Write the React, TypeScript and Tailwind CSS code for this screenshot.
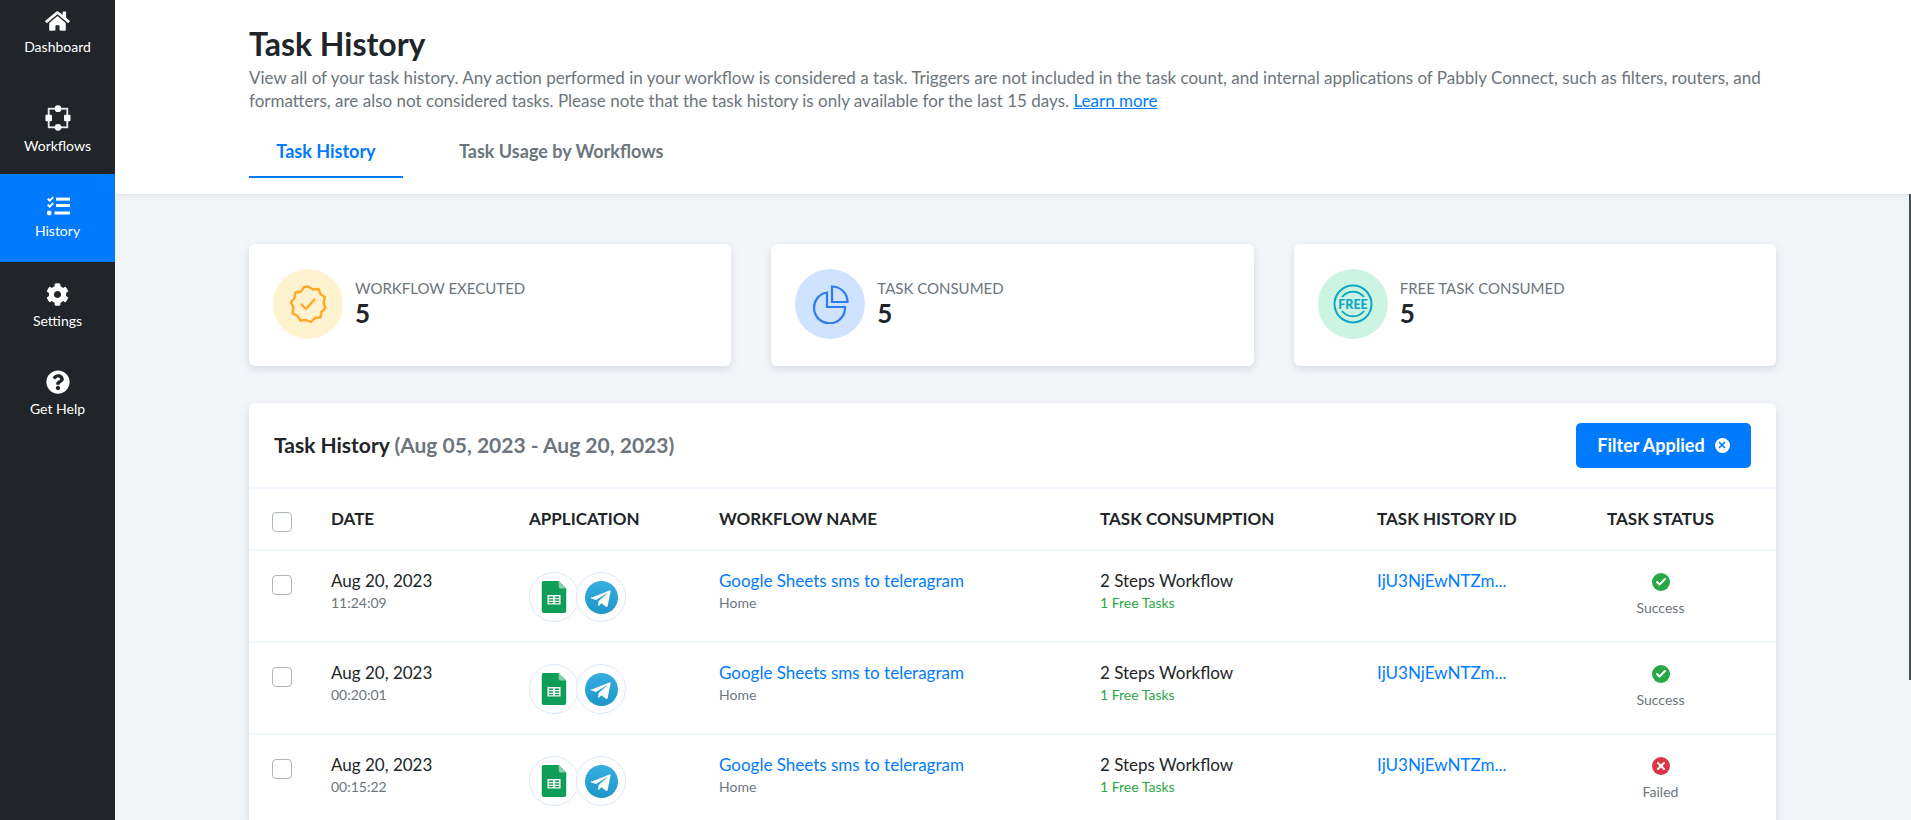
import { Check, X } from "lucide-react";

const font = "font-['Lato','Liberation_Sans',sans-serif]";

function HomeIcon() {
  return (
    <svg viewBox="0 0 576 512" className="h-[22px] w-[25px] fill-white">
      <path d="M280.4 148.3 96 300.1V464a16 16 0 0 0 16 16l112-.3a16 16 0 0 0 16-16V368a16 16 0 0 1 16-16h64a16 16 0 0 1 16 16v95.6a16 16 0 0 0 16 16.1l112 .3a16 16 0 0 0 16-16V300L295.7 148.3a12.2 12.2 0 0 0-15.3 0zM571.6 251.5 488 182.6V44a12 12 0 0 0-12-12h-56a12 12 0 0 0-12 12v72.6L318.5 43a48 48 0 0 0-61 0L4.3 251.5a12 12 0 0 0-1.6 16.9l25.5 31a12 12 0 0 0 16.9 1.6l235.2-193.7a12.2 12.2 0 0 1 15.3 0L530.9 301a12 12 0 0 0 16.9-1.6l25.5-31a12 12 0 0 0-1.7-16.9z" />
    </svg>
  );
}

function WorkflowIcon() {
  return (
    <svg viewBox="0 0 28 28" className="h-[26px] w-[28px]">
      <rect x="4" y="4" width="20" height="20" fill="none" stroke="#e5e7eb" strokeWidth="2" />
      <circle cx="14" cy="4" r="3.6" fill="#fff" />
      <circle cx="14" cy="24" r="3.6" fill="#fff" />
      <rect x="0.5" y="10.5" width="7" height="7" rx="1" fill="#fff" />
      <rect x="20.5" y="10.5" width="7" height="7" rx="1" fill="#fff" />
    </svg>
  );
}

function HistoryIcon() {
  return (
    <svg viewBox="0 0 24 20" className="h-[20px] w-[24px] fill-white">
      <path d="M1 3.2 2.3 2l1.4 1.3L6.6.4 8 1.7 3.7 6z" />
      <path d="M1 9.2 2.3 8l1.4 1.3 2.9-2.9L8 7.7 3.7 12z" />
      <circle cx="3.2" cy="17" r="2.4" />
      <rect x="10" y="1.6" width="14" height="3" />
      <rect x="10" y="8" width="14" height="3" />
      <rect x="8.5" y="15.5" width="15.5" height="3" />
    </svg>
  );
}

function GearIcon() {
  return (
    <svg viewBox="0 0 512 512" className="h-[23px] w-[23px] fill-white">
      <path d="M487.4 315.7l-42.6-24.6c4.3-23.2 4.3-47 0-70.2l42.6-24.6c4.9-2.8 7.1-8.6 5.5-14-11.1-35.6-30-67.8-54.7-94.6-3.8-4.1-10-5.1-14.8-2.3L380.8 110c-17.9-15.4-38.5-27.3-60.8-35.1V25.8c0-5.6-3.9-10.5-9.4-11.7-36.7-8.2-74.3-7.8-109.2 0-5.5 1.2-9.4 6.1-9.4 11.7V75c-22.2 7.9-42.8 19.8-60.8 35.1L88.7 85.5c-4.9-2.8-11-1.9-14.8 2.3-24.7 26.7-43.6 58.9-54.7 94.6-1.7 5.4.6 11.2 5.5 14L67.3 221c-4.3 23.2-4.3 47 0 70.2l-42.6 24.6c-4.9 2.8-7.1 8.6-5.5 14 11.1 35.6 30 67.8 54.7 94.6 3.8 4.1 10 5.1 14.8 2.3l42.6-24.6c17.9 15.4 38.5 27.3 60.8 35.1v49.2c0 5.6 3.9 10.5 9.4 11.7 36.7 8.2 74.3 7.8 109.2 0 5.5-1.2 9.4-6.1 9.4-11.7v-49.2c22.2-7.9 42.8-19.8 60.8-35.1l42.6 24.6c4.9 2.8 11 1.9 14.8-2.3 24.7-26.7 43.6-58.9 54.7-94.6 1.5-5.5-.7-11.3-5.6-14.1zM256 336c-44.1 0-80-35.9-80-80s35.9-80 80-80 80 35.9 80 80-35.9 80-80 80z" />
    </svg>
  );
}

function HelpIcon() {
  return (
    <svg viewBox="0 0 512 512" className="h-[24px] w-[24px] fill-white">
      <path d="M504 256c0 137-111 248-248 248S8 393 8 256 119 8 256 8s248 111 248 248zM262.700 90c-54.500 0-89.300 23-116.500 63.800-3.500 5.300-2.400 12.400 2.700 16.300l34.700 26.300c5.200 3.900 12.600 3 16.700-2.100 17.900-22.700 30.100-35.800 57.300-35.800 20.400 0 45.700 13.100 45.700 32.900 0 14.900-12.300 22.600-32.400 33.900C247.200 238.400 216 254.900 216 296v4c0 6.600 5.400 12 12 12h56c6.600 0 12-5.400 12-12v-1.300c0-28.500 83.200-29.700 83.200-106.700 0-58-60.200-102-116.500-102zM256 338c-25.400 0-46 20.600-46 46 0 25.400 20.600 46 46 46s46-20.600 46-46c0-25.400-20.600-46-46-46z" />
    </svg>
  );
}

function NavItem({ label, icon, active, h }: { label: string; icon: React.ReactNode; active?: boolean; h: string }) {
  return (
    <div className={`flex flex-col items-center justify-center gap-[6px] text-[14px] text-white ${h} ${active ? "bg-[#007bff]" : ""}`}>
      {icon}
      <span className="leading-[18px]">{label}</span>
    </div>
  );
}

function BadgeIcon() {
  return (
    <svg viewBox="0 0 40 40" className="h-[40px] w-[40px]" fill="none" stroke="#ffa726" strokeWidth="2.4" strokeLinecap="round" strokeLinejoin="round">
      <path d="M20 2.500 25 5.500 30.500 5 32.500 10 37 13.200 35.500 18.800 37.500 24 33.500 27.800 32.500 33.300 27 34 23 38 18 36 12.500 36.500 9.500 32 4.500 29 5.500 23.500 2.800 18.500 6.500 14 7.500 8.500 13 7.500 16 3.200z" />
      <path d="M13.500 20.500 18 25 26.500 15.500" />
    </svg>
  );
}

function PieIcon() {
  return (
    <svg viewBox="0 0 40 40" className="h-[40px] w-[40px]" fill="none" stroke="#2f7cf0" strokeWidth="2.200">
      <path d="M17 8.500A15.500 15.500 0 1 0 35 23H17z" />
      <path d="M22 2.500V18h15.500A15.500 15.500 0 0 0 22 2.500z" />
    </svg>
  );
}

function FreeIcon() {
  return (
    <svg viewBox="0 0 40 40" className="h-[40px] w-[40px]" fill="none" stroke="#0ea5c6" strokeWidth="2">
      <circle cx="20" cy="20" r="18.500" />
      <path d="M9 13A14 14 0 0 1 31 13" />
      <path d="M9 27A14 14 0 0 0 31 27" />
      <text x="20" y="24.800" textAnchor="middle" fontSize="12.500" fontWeight="900" fill="#0ea5c6" stroke="none" fontFamily="Lato, sans-serif">FREE</text>
    </svg>
  );
}

function StatCard({ title, icon, tint }: { title: string; icon: React.ReactNode; tint: string }) {
  return (
    <div className="flex h-[122px] items-center gap-[12px] rounded-[6px] bg-white pb-[2px] pl-[24px] shadow-[0_3px_8px_rgba(70,90,120,0.18)]">
      <div className={`flex h-[70px] w-[70px] items-center justify-center rounded-full ${tint}`}>{icon}</div>
      <div className="-mt-[2px]">
        <div className="text-[15px] leading-[20px] text-[#6c757d]">{title}</div>
        <div className="text-[26px] leading-[30px] font-bold text-[#212529]">5</div>
      </div>
    </div>
  );
}

function SheetsLogo() {
  return (
    <svg viewBox="0 0 26 34" className="h-[32px] w-[26px]">
      <path d="M2 0h16l8 8v24a2 2 0 0 1-2 2H2a2 2 0 0 1-2-2V2a2 2 0 0 1 2-2z" fill="#0f9d58" />
      <path d="M18 0l8 8h-6a2 2 0 0 1-2-2z" fill="#87ceac" />
      <path d="M6 15h14v10H6z M7.500 16.500v1.500h4.500v-1.500z M14 16.500v1.500h4.500v-1.500z M7.500 19.500v1.500h4.500v-1.500z M14 19.500v1.500h4.500v-1.500z M7.500 22.200v1.400h4.500v-1.400z M14 22.200v1.400h4.500v-1.400z" fill="#f1f1f1" fillRule="evenodd" />
    </svg>
  );
}

function TelegramLogo() {
  return (
    <svg viewBox="0 0 34 34" className="h-[33px] w-[33px]">
      <defs>
        <linearGradient id="tg" x1="0" y1="0" x2="0" y2="1">
          <stop offset="0" stopColor="#37aee2" />
          <stop offset="1" stopColor="#1e96c8" />
        </linearGradient>
      </defs>
      <circle cx="17" cy="17" r="17" fill="url(#tg)" />
      <path d="M7 17l18-7.200c.9-.3 1.600.2 1.300 1.400l-3 14.500c-.2 1-.9 1.300-1.700.8l-4.700-3.500-2.300 2.200c-.3.300-.5.500-1 .5l.3-4.800 8.700-7.900c.4-.3-.1-.5-.6-.2l-10.700 6.800-4.600-1.500c-1-.3-1-1 .1-1.400z" fill="#fff" />
    </svg>
  );
}

function Row({ time, failed }: { time: string; failed?: boolean }) {
  return (
    <div className="grid h-[92px] grid-cols-[82px_198px_190px_381px_277px_196px_1fr] border-t-2 border-[#eff6ff]">
      <div className="pt-[24px] pl-[23px]">
        <div className="h-[20px] w-[20px] rounded-[4px] border border-[#adb5bd] bg-white" />
      </div>
      <div className="pt-[19px]">
        <div className="text-[17px] leading-[22px] text-[#212529]">Aug 20, 2023</div>
        <div className="mt-[2px] text-[14px] leading-[18px] text-[#6c757d]">{time}</div>
      </div>
      <div className="flex items-start pt-[21px]">
        <div className="flex h-[50px] w-[50px] items-center justify-center rounded-full border border-[#dbe7fb] bg-white">
          <SheetsLogo />
        </div>
        <div className="-ml-[3px] flex h-[50px] w-[50px] items-center justify-center rounded-full border border-[#dbe7fb] bg-white">
          <TelegramLogo />
        </div>
      </div>
      <div className="pt-[19px]">
        <div className="text-[17px] leading-[22px] text-[#007bff]">Google Sheets sms to teleragram</div>
        <div className="mt-[2px] text-[14px] leading-[18px] text-[#6c757d]">Home</div>
      </div>
      <div className="pt-[19px]">
        <div className="text-[17px] leading-[22px] text-[#212529]">2 Steps Workflow</div>
        <div className="mt-[2px] text-[14px] leading-[18px] text-[#28a745]">1 Free Tasks</div>
      </div>
      <div className="pt-[19px] text-[17px] leading-[22px] text-[#007bff]">IjU3NjEwNTZm...</div>
      <div className="flex flex-col items-center pt-[22px] pr-[28px]">
        <div className={`flex h-[18px] w-[18px] items-center justify-center rounded-full ${failed ? "bg-[#dc3545]" : "bg-[#28a745]"}`}>
          {failed ? <X size={12} strokeWidth={4} color="#fff" /> : <Check size={12} strokeWidth={4} color="#fff" />}
        </div>
        <div className="mt-[8px] text-[14px] leading-[18px] text-[#6c757d]">{failed ? "Failed" : "Success"}</div>
      </div>
    </div>
  );
}

export default function App() {
  return (
    <div className={`${font} flex h-[820px] w-full overflow-hidden bg-[#f3f6f9]`}>
      <aside className="flex w-[115px] shrink-0 flex-col bg-[#212529] pt-[2px]">
        <NavItem label="Dashboard" icon={<HomeIcon />} h="h-[84px] pb-[22px]" />
        <NavItem label="Workflows" icon={<WorkflowIcon />} h="h-[88px]" />
        <NavItem label="History" icon={<HistoryIcon />} active h="h-[88px]" />
        <NavItem label="Settings" icon={<GearIcon />} h="h-[88px]" />
        <NavItem label="Get Help" icon={<HelpIcon />} h="h-[88px]" />
      </aside>
      <main className="relative min-w-0 flex-1">
        <div className="absolute top-[194px] right-0 h-[486px] w-[2px] bg-[#495057]" />
        <header className="h-[194px] bg-white pt-[24px] pl-[134px] shadow-[0_2px_6px_rgba(70,90,120,0.12)]">
          <h1 className="text-[32px] leading-[40px] font-bold text-[#212529]">Task History</h1>
          <p className="mt-[2px] w-[1580px] text-[17px] leading-[23px] text-[#6c757d]">
            View all of your task history. Any action performed in your workflow is considered a task. Triggers are not included in the task count, and internal applications of Pabbly Connect, such as filters, routers, and formatters, are also not considered tasks. Please note that the task history is only available for the last 15 days. <span className="text-[#007bff] underline">Learn more</span>
          </p>
          <div className="mt-[15px] flex text-[18px] font-bold">
            <div className="flex h-[51px] w-[154px] items-start justify-center border-b-2 border-[#007bff] pt-[11px] text-[#007bff]">Task History</div>
            <div className="ml-[56px] pt-[11px] text-[#6c757d]">Task Usage by Workflows</div>
          </div>
        </header>
        <div className="w-[1527px] pt-[50px] ml-[134px]">
          <div className="grid grid-cols-3 gap-[40px]">
            <StatCard title="WORKFLOW EXECUTED" icon={<BadgeIcon />} tint="bg-[#fff2cf]" />
            <StatCard title="TASK CONSUMED" icon={<PieIcon />} tint="bg-[#cfe2ff]" />
            <StatCard title="FREE TASK CONSUMED" icon={<FreeIcon />} tint="bg-[#cbf4e3]" />
          </div>
          <section className="mt-[37px] rounded-[6px] bg-white shadow-[0_3px_8px_rgba(70,90,120,0.18)]">
            <div className="flex h-[84px] items-center justify-between pr-[25px] pl-[25px]">
              <div className="text-[21px] font-bold text-[#212529]">
                Task History <span className="text-[#6c757d]">(Aug 05, 2023 - Aug 20, 2023)</span>
              </div>
              <button className="flex h-[45px] w-[175px] items-center justify-center gap-[10px] rounded-[5px] bg-[#007bff] text-[18px] font-bold text-white">
                Filter Applied
                <span className="flex h-[15px] w-[15px] items-center justify-center rounded-full bg-white">
                  <X size={10} strokeWidth={4} color="#007bff" />
                </span>
              </button>
            </div>
            <div className="grid h-[62px] grid-cols-[82px_198px_190px_381px_277px_196px_1fr] items-center border-t-2 border-[#eff6ff] text-[17px] font-bold text-[#212529]">
              <div className="pt-[6px] pl-[23px]">
                <div className="h-[20px] w-[20px] rounded-[4px] border border-[#adb5bd] bg-white" />
              </div>
              <div>DATE</div>
              <div>APPLICATION</div>
              <div>WORKFLOW NAME</div>
              <div>TASK CONSUMPTION</div>
              <div>TASK HISTORY ID</div>
              <div className="pr-[28px] text-center">TASK STATUS</div>
            </div>
            <Row time="11:24:09" />
            <Row time="00:20:01" />
            <Row time="00:15:22" failed />
          </section>
        </div>
      </main>
    </div>
  );
}
